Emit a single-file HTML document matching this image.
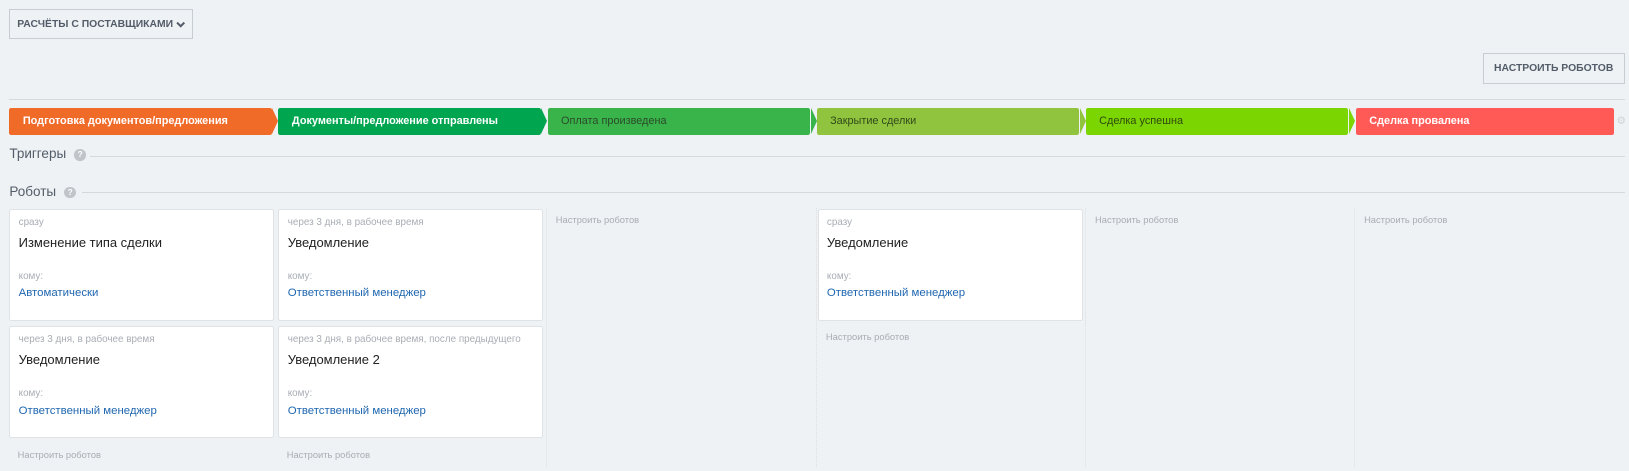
<!DOCTYPE html>
<html><head><meta charset="utf-8"><style>
*{box-sizing:border-box;margin:0;padding:0}
html,body{width:1629px;height:471px;background:#eef2f4;overflow:hidden}
#w{zoom:1.0389;width:1568px;height:453px;position:relative;font-family:"Liberation Sans",sans-serif}
.abs{position:absolute}
.btn{position:absolute;border:1px solid #c6cdd3;background:#eef2f4;font-size:10px;font-weight:bold;color:#535c69;display:flex;align-items:center;justify-content:center}
.hr{position:absolute;height:1px;background:#d5d9dc}
.st{position:absolute;top:104px;height:26px;font-size:10.5px;font-weight:bold;padding-left:13px;line-height:26px;border-radius:2px}
.st:after{content:"";position:absolute;right:-6px;top:0;border-top:13px solid transparent;border-bottom:13px solid transparent;border-left:6px solid var(--c);z-index:2}
.card{position:absolute;width:255px;height:108px;background:#fff;border:1px solid #dfe3e6;border-radius:2px;padding:7px 8px}
.card .d{font-size:9.5px;color:#a8adb4;height:14px}
.card .t{font-size:12.5px;color:#222;margin-top:3px;height:33px}
.card .k{font-size:9.5px;color:#a8adb4;margin-top:2px}
.card .l{font-size:11px;color:#2067b0;margin-top:5px}
.nr{position:absolute;font-size:9px;color:#a8adb4}
.sep{position:absolute;top:200px;height:250px;border-left:1px dotted #dde1e4}
.sec{position:absolute;left:9px;font-size:13px;color:#535c69}
.q{display:inline-block;width:11px;height:11px;border-radius:50%;background:#c0c5ca;color:#fff;font-size:8px;text-align:center;line-height:11px;margin-left:8px;vertical-align:1px;font-weight:bold}
</style></head><body><div id="w">
<div class="btn" style="left:9px;top:9px;width:177px;height:29px">РАСЧЁТЫ С ПОСТАВЩИКАМИ&nbsp;<svg width="9" height="7" viewBox="0 0 9 7"><path d="M1 1.5 L4.5 5 L8 1.5" stroke="#535c69" stroke-width="2" fill="none"/></svg></div>
<div class="btn" style="left:1427px;top:51px;width:137px;height:30px">НАСТРОИТЬ РОБОТОВ</div>
<div class="hr" style="left:9px;top:95px;width:1555px"></div>
<div class="st" style="--c:#f06a28;background:#f06a28;color:#fff;left:9px;width:253px">Подготовка документов/предложения</div>
<div class="st" style="--c:#00a54f;background:#00a54f;color:#fff;left:268px;width:253px">Документы/предложение отправлены</div>
<div class="st" style="--c:#39b44a;background:#39b44a;color:#2b4a2b;font-weight:normal;left:527px;width:253px">Оплата произведена</div>
<div class="st" style="--c:#91c43e;background:#91c43e;color:#2f4a1a;font-weight:normal;left:786px;width:253px">Закрытие сделки</div>
<div class="st" style="--c:#7bd500;background:#7bd500;color:#2f4a10;font-weight:normal;left:1045px;width:253px">Сделка успешна</div>
<div class="st" style="background:#ff5a55;color:#fff;left:1305px;width:249px">Сделка провалена</div>
<div class="abs" style="left:1556px;top:111px;font-size:10px;color:#cfd3d6">&#9881;</div>
<div class="sec" style="top:141px">Триггеры<span class="q">?</span></div>
<div class="hr" style="left:87px;top:150px;width:1477px"></div>
<div class="sec" style="top:177px">Роботы<span class="q">?</span></div>
<div class="hr" style="left:79px;top:185px;width:1485px"></div>
<div class="sep" style="left:526px"></div><div class="sep" style="left:785px"></div><div class="sep" style="left:1044px"></div><div class="sep" style="left:1303px"></div>
<div class="card" style="left:9px;top:201px"><div class="d">сразу</div><div class="t">Изменение типа сделки</div><div class="k">кому:</div><div class="l">Автоматически</div></div>
<div class="card" style="left:268px;top:201px"><div class="d">через 3 дня, в рабочее время</div><div class="t">Уведомление</div><div class="k">кому:</div><div class="l">Ответственный менеджер</div></div>
<div class="card" style="left:9px;top:314px"><div class="d">через 3 дня, в рабочее время</div><div class="t">Уведомление</div><div class="k">кому:</div><div class="l">Ответственный менеджер</div></div>
<div class="card" style="left:268px;top:314px"><div class="d">через 3 дня, в рабочее время, после предыдущего</div><div class="t">Уведомление 2</div><div class="k">кому:</div><div class="l">Ответственный менеджер</div></div>
<div class="card" style="left:787px;top:201px"><div class="d">сразу</div><div class="t">Уведомление</div><div class="k">кому:</div><div class="l">Ответственный менеджер</div></div>
<div class="nr" style="left:535px;top:207px">Настроить роботов</div>
<div class="nr" style="left:1054px;top:207px">Настроить роботов</div>
<div class="nr" style="left:1313px;top:207px">Настроить роботов</div>
<div class="nr" style="left:795px;top:320px">Настроить роботов</div>
<div class="nr" style="left:17px;top:433px">Настроить роботов</div>
<div class="nr" style="left:276px;top:433px">Настроить роботов</div>
</div></body></html>
